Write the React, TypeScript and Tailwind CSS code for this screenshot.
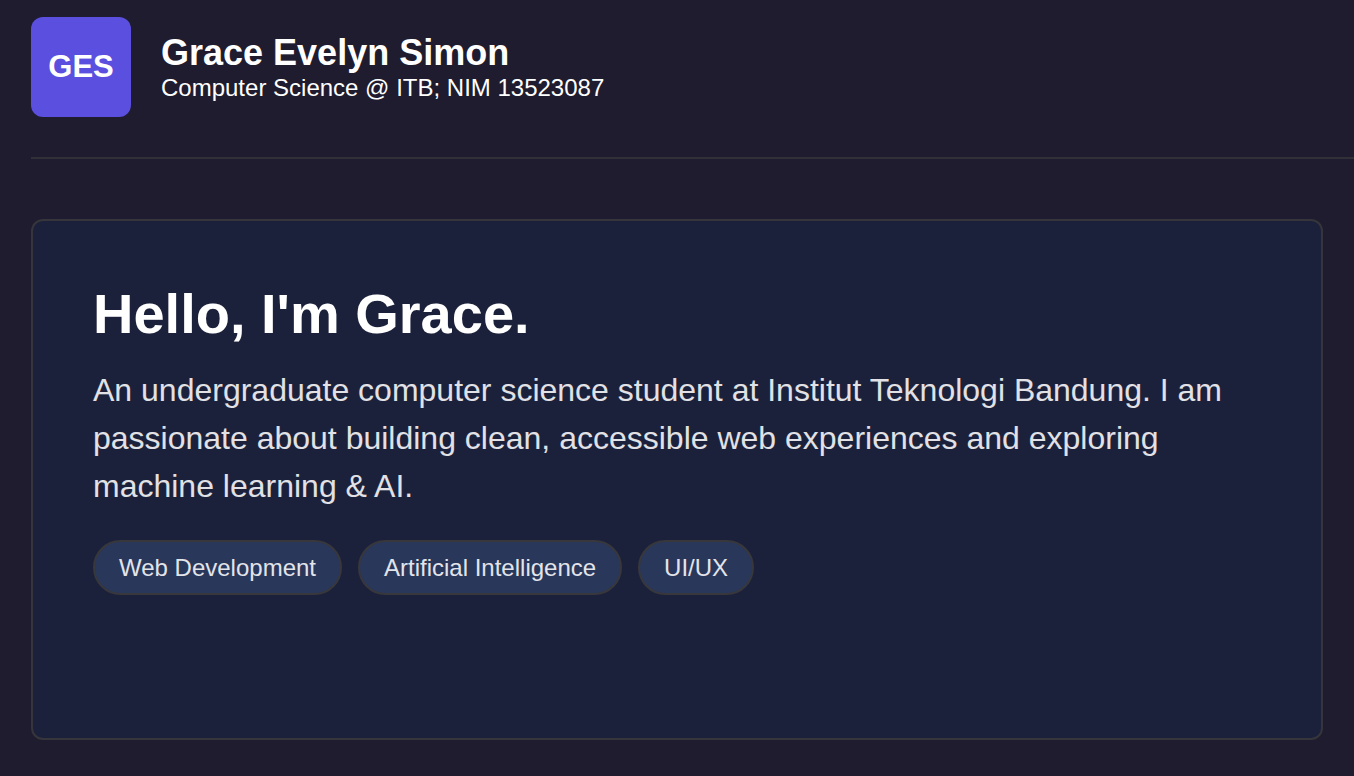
const tags = ["Web Development", "Artificial Intelligence", "UI/UX"];

const App = () => {
  return (
    <div className="min-h-screen w-full overflow-hidden bg-[#1e1c2e] font-['Liberation_Sans',Arial,sans-serif] text-white">
      <header className="flex items-center gap-[30px] pl-[31px] pt-[17px] pb-[40px]">
        <div className="flex h-[100px] w-[100px] shrink-0 items-center justify-center rounded-xl bg-[#5a4fdf] text-[31px] font-bold">
          GES
        </div>
        <div className="flex flex-col">
          <h1 className="text-[36px] font-bold leading-[1.2]">Grace Evelyn Simon</h1>
          <p className="text-[24px] leading-[1.2]">Computer Science @ ITB; NIM 13523087</p>
        </div>
      </header>

      <div className="ml-[31px] h-[2px] bg-[#313039]"></div>

      <main className="px-[31px] pt-[60px]">
        <section className="h-[521px] rounded-xl border-2 border-[#35353b] bg-[#1c213b] px-[60px] pt-[59px]">
          <h2 className="text-[56px] font-bold leading-[1.2]">Hello, I'm Grace.</h2>
          <p className="mt-[19px] text-[32px] leading-[1.5] text-[#e1e1e6]">
            An undergraduate computer science student at Institut Teknologi Bandung. I am passionate about building clean,
            accessible web experiences and exploring machine learning &amp; AI.
          </p>
          <div className="mt-[30px] flex flex-wrap gap-4">
            {tags.map((tag) => (
              <span
                key={tag}
                className="rounded-full border-2 border-[#37373c] bg-[#29375a] px-[24px] py-[8px] text-[24px] leading-[35px] text-[#e3e4ea]"
              >
                {tag}
              </span>
            ))}
          </div>
        </section>
      </main>
    </div>
  );
};

export default App;
